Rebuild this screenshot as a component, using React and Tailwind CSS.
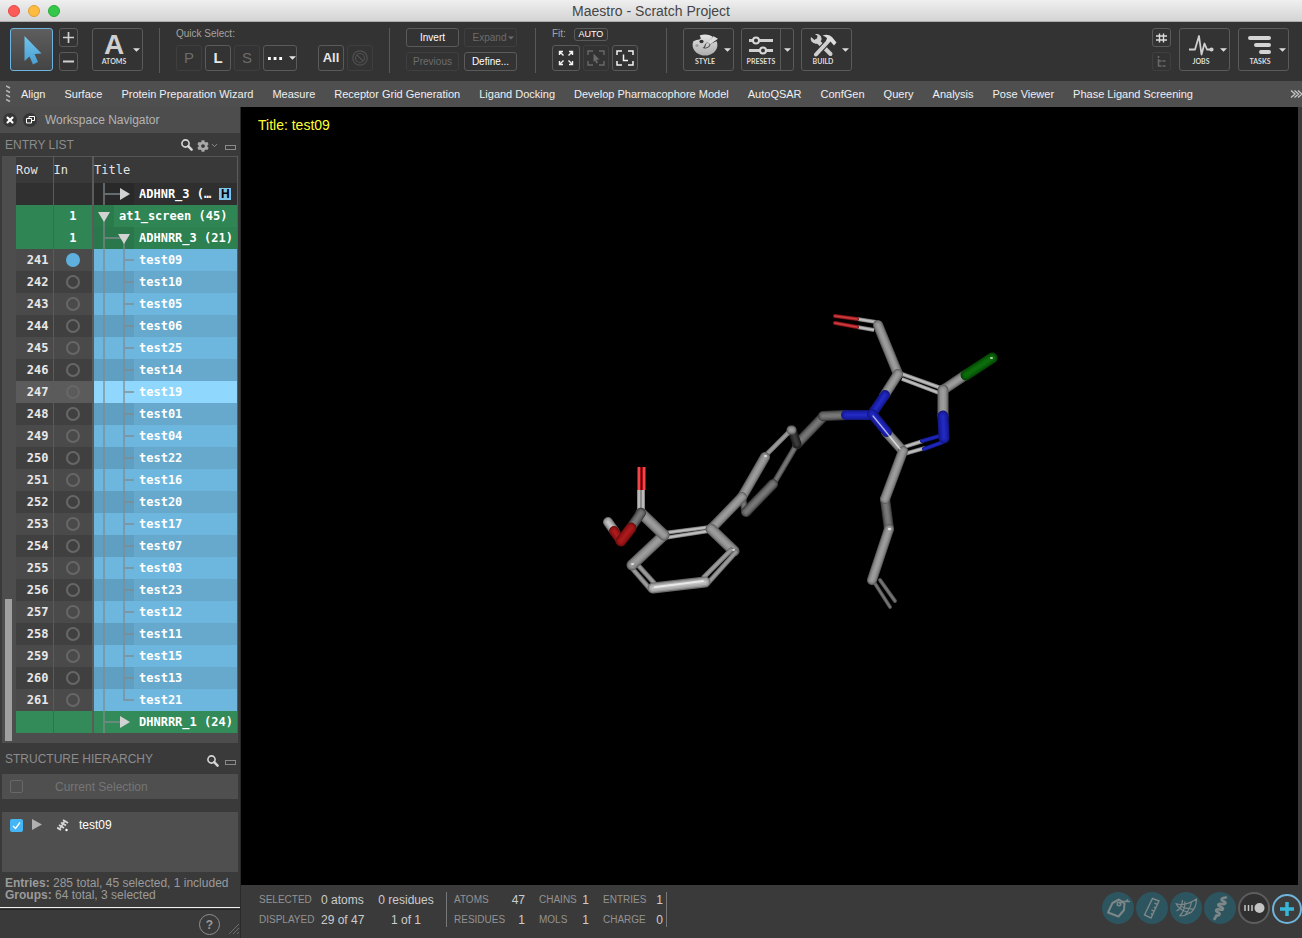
import React from "react";
import { FaCog } from "react-icons/fa";
import { ChevronDown, X } from "lucide-react";

const entries = [
  "test09", "test10", "test05", "test06", "test25", "test14", "test19",
  "test01", "test04", "test22", "test16", "test20", "test17", "test07",
  "test03", "test23", "test12", "test11", "test15", "test13", "test21",
];

const menuItems = [
  "Align", "Surface", "Protein Preparation Wizard", "Measure",
  "Receptor Grid Generation", "Ligand Docking", "Develop Pharmacophore Model",
  "AutoQSAR", "ConfGen", "Query", "Analysis", "Pose Viewer",
  "Phase Ligand Screening",
];

function Divider() {
  return <div className="h-[45px] w-px bg-[#585858]" />;
}

function Caret({ className = "" }) {
  return (
    <svg width="7" height="4" viewBox="0 0 8 4" className={`shrink-0 ${className}`} aria-hidden="true">
      <path d="M0 0h8L4 4z" fill="currentColor" />
    </svg>
  );
}

function ToolButton({ className = "", disabled = false, label, children }) {
  return (
    <button
      type="button"
      aria-label={label}
      disabled={disabled}
      className={`flex items-center justify-center rounded-[3px] border ${
        disabled ? "border-[#3f3f3f] text-[#6c6c6c]" : "border-[#5a5a5a] text-[#e6e6e6]"
      } ${className}`}
    >
      {children}
    </button>
  );
}

function BigButton({ text, children }) {
  return (
    <button
      type="button"
      className="flex h-[43px] w-[51px] items-center rounded-[3px] border border-[#5a5a5a] pl-1.5 text-[#dcdcdc]"
    >
      <span className="flex w-[30px] flex-col items-center">
        <span className="flex h-6 items-center justify-center">{children}</span>
        <span className="font-[Lato] text-[7px] leading-[9px] font-bold">{text}</span>
      </span>
      <Caret className="ml-1" />
    </button>
  );
}

function Toolbar() {
  return (
    <div className="flex h-[59px] items-start bg-[#333333] pt-1.5 pr-[13px] pl-2.5">
      <button
        type="button"
        aria-label="Pointer"
        className="flex h-[43px] w-[43px] items-center justify-center rounded-[3px] border border-[#6bb5df] bg-linear-to-b from-[#5e5e5e] to-[#444444]"
      >
        <svg width="20" height="32" viewBox="0 0 20 32" aria-hidden="true">
          <defs>
            <linearGradient id="ptr" x1="0" y1="0" x2="0" y2="1">
              <stop offset="0" stopColor="#72c4ee" />
              <stop offset="1" stopColor="#4a9fd0" />
            </linearGradient>
          </defs>
          <path d="M2.500 2L19.500 19.500L12.500 20L16 28L11 30.500L7.500 22.500L2.500 27Z" fill="url(#ptr)" />
        </svg>
      </button>
      <div className="ml-1.5 flex flex-col gap-[5px]">
        <ToolButton label="Increase selection" className="h-[19px] w-[19px]">
          <svg width="11" height="11" viewBox="0 0 11 11" aria-hidden="true">
            <path d="M5.500 0v11M0 5.500h11" stroke="#d0d0d0" strokeWidth="1.700" />
          </svg>
        </ToolButton>
        <ToolButton label="Decrease selection" className="h-[19px] w-[19px]">
          <svg width="11" height="11" viewBox="0 0 11 11" aria-hidden="true">
            <path d="M0 5.500h11" stroke="#d0d0d0" strokeWidth="2" />
          </svg>
        </ToolButton>
      </div>
      <div className="ml-3.5">
        <BigButton text="ATOMS">
          <span className="text-[28px] leading-6 font-bold text-[#cfcfcf]">A</span>
        </BigButton>
      </div>
      <div className="ml-4"><Divider /></div>

      <div className="ml-4">
        <div className="h-[17px] text-[10px] leading-[12px] text-[#a2a2a2]">Quick Select:</div>
        <div className="flex gap-[3px]">
          <ToolButton disabled className="h-[26px] w-[26px] text-[15px]">P</ToolButton>
          <ToolButton className="h-[26px] w-[26px] text-[15px] font-bold">L</ToolButton>
          <ToolButton disabled className="h-[26px] w-[26px] text-[15px]">S</ToolButton>
          <ToolButton label="More selections" className="h-[26px] w-[34px] gap-1.5 pl-1">
            <svg width="16" height="4" viewBox="0 0 16 4" aria-hidden="true">
              <path d="M0 1h3v3h-3zM6 1h3v3h-3zM12 1h3v3h-3z" fill="#ffffff" />
            </svg>
            <Caret />
          </ToolButton>
          <ToolButton className="ml-[18px] h-[26px] w-[26px] text-[13px] font-bold">All</ToolButton>
          <ToolButton label="Clear selection" disabled className="h-[26px] w-[26px]">
            <svg width="16" height="16" viewBox="0 0 16 16" fill="none" stroke="#505050" strokeWidth="1.200" aria-hidden="true">
              <circle cx="8" cy="8" r="7.200" />
              <circle cx="8" cy="8" r="4.500" />
              <path d="M5 5l6 6" />
            </svg>
          </ToolButton>
        </div>
      </div>
      <div className="ml-4"><Divider /></div>

      <div className="ml-4 grid grid-cols-[53px_53px] gap-[5px] text-[10px]">
        <ToolButton className="h-[19px] text-white">Invert</ToolButton>
        <ToolButton disabled className="h-[19px] gap-0.5 pl-1.5">Expand<Caret className="w-1.5" /></ToolButton>
        <ToolButton disabled className="h-[19px]">Previous</ToolButton>
        <ToolButton className="h-[19px] text-white">Define...</ToolButton>
      </div>
      <div className="ml-[18px]"><Divider /></div>

      <div className="ml-4">
        <div className="flex h-[17px] items-start gap-2">
          <span className="text-[10px] leading-[12px] text-[#a2a2a2]">Fit:</span>
          <ToolButton className="h-[13px] w-[34px] text-[9px] text-white">AUTO</ToolButton>
        </div>
        <div className="flex gap-[3px]">
          <ToolButton label="Fit all" className="h-[26px] w-7">
            <svg width="16" height="16" viewBox="0 0 16 16" fill="none" stroke="#f4f4f4" strokeWidth="1.400" aria-hidden="true">
              <path d="M1.500 5v-3.500h3.500M1.500 1.500l4 4M11 1.500h3.500v3.500M14.500 1.500l-4 4M1.500 11v3.500h3.500M1.500 14.500l4-4M11 14.500h3.500v-3.500M14.500 14.500l-4-4" />
            </svg>
          </ToolButton>
          <ToolButton label="Fit selected" disabled className="h-[26px] w-[26px]">
            <svg width="18" height="16" viewBox="0 0 18 16" fill="none" stroke="#6a6a6a" strokeWidth="1.400" aria-hidden="true">
              <path d="M1 5v-4h5M12 1h5v4M1 11v4h5M12 15h5v-4" />
              <path d="M6.500 3.500l6 6l-3 .3l1.500 3l-1.700 .7l-1.300-3l-1.500 1.500z" fill="#6a6a6a" stroke="none" />
            </svg>
          </ToolButton>
          <ToolButton label="Fit ligand" className="h-[26px] w-[26px]">
            <svg width="18" height="16" viewBox="0 0 18 16" fill="none" stroke="#f4f4f4" strokeWidth="1.500" aria-hidden="true">
              <path d="M1 5v-4h5M12 1h5v4M1 11v4h5M12 15h5v-4M7.500 4.500v6h4.500" />
            </svg>
          </ToolButton>
        </div>
      </div>
      <div className="ml-7"><Divider /></div>

      <div className="ml-4 flex gap-[7px]">
        <BigButton text="STYLE">
          <svg width="26" height="22" viewBox="0 0 26 22" aria-hidden="true">
            <defs>
              <linearGradient id="pal" x1="0" y1="0" x2="0" y2="1">
                <stop offset="0" stopColor="#e4e4e4" />
                <stop offset="1" stopColor="#adadad" />
              </linearGradient>
            </defs>
            <ellipse cx="13" cy="11" rx="12.400" ry="10.600" fill="url(#pal)" />
            <path d="M0 4L7 0L8.500 3.200Q9.500 5 7.500 5.400Q4 5.600 2 7L0 7Z" fill="#333333" />
            <path d="M26 1L20.500 3L16.500 8Q13.500 8.500 12.800 11Q12.500 13.500 10.500 14Q15.500 15.500 18 12L18.500 10L26 6.500Z" fill="#333333" />
            <path d="M21.500 2.200L15.500 8.300L18.300 10.200L26 4.800Z" fill="#dddddd" />
            <path d="M15.500 8.500Q13.800 9 13.700 11Q13.500 13 12.500 13.600Q16 14 17.300 11.500L17.600 10Z" fill="#cccccc" />
            <ellipse cx="9.500" cy="7.500" rx="2.100" ry="1.800" fill="#333333" />
            <circle cx="5" cy="11.500" r="1.600" fill="#9c9c9c" />
          </svg>
        </BigButton>
        <div className="flex h-[43px] w-[53px] rounded-[3px] border border-[#5a5a5a]">
          <button type="button" className="flex w-[39px] flex-col items-center border-r border-[#5a5a5a] pt-1 text-[#dcdcdc]">
            <span className="flex h-6 items-center">
              <svg width="24" height="19" viewBox="0 0 24 19" fill="none" aria-hidden="true">
                <path d="M0 4.500h24M0 14.500h24" stroke="#cfcfcf" strokeWidth="3" />
                <circle cx="7" cy="4.500" r="3" fill="#333333" stroke="#d8d8d8" strokeWidth="2" />
                <circle cx="14" cy="14.500" r="3" fill="#333333" stroke="#d8d8d8" strokeWidth="2" />
              </svg>
            </span>
            <span className="font-[Lato] text-[7px] leading-[9px] font-bold">PRESETS</span>
          </button>
          <button type="button" aria-label="Preset list" className="flex flex-1 items-center justify-center text-[#dcdcdc]">
            <Caret />
          </button>
        </div>
        <BigButton text="BUILD">
          <svg width="27" height="23" viewBox="0 0 27 23" aria-hidden="true">
            <path d="M7 6.500L20.500 20" stroke="#cfcfcf" strokeWidth="4" strokeLinecap="round" />
            <path d="M1 3L4.500 6L7 4.800L7.500 1.800L5 .2C9 -.5 12 2 11.500 6L8.500 9.500C4 10.500 -.5 7.500 1 3Z" fill="#cfcfcf" />
            <path d="M7 19.500L18 7.500" stroke="#333333" strokeWidth="6" />
            <path d="M6 20.500L18.500 7" stroke="#cfcfcf" strokeWidth="4" strokeLinecap="round" />
            <path d="M12.500 1.500Q18 -.5 22 3L24 5.500L26.500 8.500L24 11.500L20.500 7.500L16 7.500L17 4Q15 2 12.500 1.500Z" fill="#dddddd" />
          </svg>
        </BigButton>
      </div>

      <div className="ml-auto flex">
        <div className="flex flex-col gap-[5px]">
          <ToolButton label="Toggle grid" className="h-[19px] w-[19px]">
            <svg width="11" height="10" viewBox="0 0 11 10" fill="none" stroke="#dddddd" strokeWidth="1.400" aria-hidden="true">
              <path d="M3.500 .5v9M7.500 .5v9M0 3h11M0 7h11" />
            </svg>
          </ToolButton>
          <ToolButton label="Toggle tree" disabled className="h-[19px] w-[19px]">
            <svg width="9" height="11" viewBox="0 0 9 11" fill="none" stroke="#6a6a6a" strokeWidth="1.500" aria-hidden="true">
              <path d="M1.500 0v2M1.500 3v7h3M1.500 5h3M5.500 5h3M5.500 10h3" />
            </svg>
          </ToolButton>
        </div>
        <div className="ml-2 flex gap-2">
          <BigButton text="JOBS">
            <svg width="26" height="22" viewBox="0 0 26 22" fill="none" stroke="#cfcfcf" strokeWidth="1.800" strokeLinejoin="round" aria-hidden="true">
              <path d="M1 15.500h6L11 2L13.500 20.500L16.500 9.500L19 15.500h3" />
              <circle cx="23.500" cy="15.500" r="1.200" fill="#cfcfcf" />
            </svg>
          </BigButton>
          <BigButton text="TASKS">
            <svg width="24" height="20" viewBox="0 0 24 20" stroke="#d4d4d4" strokeWidth="4" strokeLinecap="round" aria-hidden="true">
              <path d="M2 3h19M8 10h13M13 17h8" />
            </svg>
          </BigButton>
        </div>
      </div>
    </div>
  );
}

function MenuBar() {
  return (
    <nav className="flex h-[26px] items-center bg-[#4f4f4f] pl-1.5 text-[11px] text-[#f0f0f0]">
      <svg width="6" height="18" viewBox="0 0 6 18" stroke="#b8b8b8" strokeWidth="1.500" aria-hidden="true">
        <path d="M0 1l4 2M0 5.500l4 2M0 10l4 2M0 14.500l4 2" />
      </svg>
      <div className="ml-[9px] flex flex-1 gap-[19px]">
        {menuItems.map((m) => (
          <a key={m} href="#" className="whitespace-nowrap">{m}</a>
        ))}
      </div>
      <button type="button" aria-label="More tools">
        <svg width="12" height="8" viewBox="0 0 12 8" fill="none" stroke="#c8c8c8" strokeWidth="1.300" aria-hidden="true">
          <path d="M1 .5l4 3.500l-4 3.500M4.500 .5l4 3.500l-4 3.500M8 .5l4 3.500l-4 3.500" />
        </svg>
      </button>
    </nav>
  );
}

function MinimizeIcon() {
  return <span className="block h-[5px] w-[11px] border border-[#8a8a8a]" />;
}

function SearchIcon() {
  return (
    <svg width="12" height="12" viewBox="0 0 12 12" fill="none" stroke="#d6d6d6" aria-hidden="true">
      <circle cx="4.500" cy="4.500" r="3.600" strokeWidth="1.600" />
      <path d="M7.200 7.200L10.600 10.600" strokeWidth="2.500" strokeLinecap="round" />
    </svg>
  );
}

function Tree({ kind, shade }) {
  const wide = kind !== "root";
  return (
    <svg width={wide ? 40 : 20} height="22" viewBox={wide ? "0 0 40 22" : "0 0 20 22"} className="shrink-0" aria-hidden="true">
      {shade && <rect width="40" height="22" fill={shade} />}
      <g stroke="#808a8f" strokeWidth="1.800" strokeOpacity="0.700" fill="none">
        {kind === "root" && <path d="M10 14v8" />}
        {kind === "closed" && <path d="M10 0v22M10 11h18" />}
        {kind === "open" && <path d="M10 0v22M10 11h18M30 15v7" />}
        {kind === "leaf" && <path d="M10 0v22M30 0v22M30 11h10" />}
        {kind === "last" && <path d="M10 0v22M30 0v11h10" />}
      </g>
      {kind === "root" && <path d="M4 7h12l-6 10z" fill="#d2d2d2" />}
      {kind === "open" && <path d="M24 7h12l-6 10z" fill="#d2d2d2" />}
      {kind === "closed" && <path d="M26 5v12l10-6z" fill="#d2d2d2" />}
    </svg>
  );
}

function GroupRow({ count, title, kind, bg, titleBg, shade, badge }) {
  return (
    <tr className={`h-[22px] font-bold text-white ${bg}`}>
      <td className="border-r border-[#5b5b5b] p-0" />
      <td className="border-r-2 border-[#5b5b5b] p-0 text-center">{count}</td>
      <td className={`border-r border-[#5b5b5b] p-0 ${titleBg}`}>
        <div className="flex h-[22px] items-center">
          <Tree kind={kind} shade={shade} />
          <span className="ml-[5px] whitespace-nowrap">{title}</span>
          {badge && (
            <span className="ml-2 flex h-3 w-3 items-center justify-center bg-[#7cc5ee] font-['Liberation_Sans'] text-[12px] leading-3 text-black">
              H
            </span>
          )}
        </div>
      </td>
    </tr>
  );
}

function EntryTable() {
  return (
    <table className="flex-1 table-fixed border-collapse self-start font-['DejaVu_Sans_Mono',monospace] text-[12px] leading-[22px]">
      <colgroup>
        <col className="w-[37px]" />
        <col className="w-10" />
        <col />
      </colgroup>
      <thead>
        <tr className="h-[26px] border-t border-[#565656] bg-[#393939] text-left text-[#e4e4e4]">
          <th className="border-r border-[#5b5b5b] p-0 font-normal">Row</th>
          <th className="border-r-2 border-[#5b5b5b] p-0 font-normal">In</th>
          <th className="border-r border-[#5b5b5b] p-0 font-normal">Title</th>
        </tr>
      </thead>
      <tbody>
        <GroupRow title="ADHNR_3 (…" kind="closed" bg="bg-[#303030]" titleBg="bg-[#2f2f2f]" shade="#292929" badge />
        <GroupRow count="1" title="at1_screen (45)" kind="root" bg="bg-[#2f8553]" titleBg="bg-[#2f8553]" shade="#2b7a4c" />
        <GroupRow count="1" title="ADHNRR_3 (21)" kind="open" bg="bg-[#2f8553]" titleBg="bg-[#2d8050]" shade="#2a774b" />
        {entries.map((name, i) => {
          const current = i === 6;
          const odd = i % 2 === 1;
          const side = current ? "bg-[#5b5b5b]" : odd ? "bg-[#404040]" : "bg-[#4a4a4a]";
          const main = current ? "bg-[#8fd7fc]" : odd ? "bg-[#66a9cc]" : "bg-[#6db7df]";
          return (
            <tr key={name} className={`h-[22px] font-bold text-[#e8e8e8] ${side}`}>
              <td className="border-r border-[#5b5b5b] p-0 pr-1 text-right">{241 + i}</td>
              <td className="border-r-2 border-[#5b5b5b] p-0">
                <input
                  type="radio"
                  name="included"
                  defaultChecked={i === 0}
                  aria-label={`Include ${name}`}
                  className="mx-auto block h-3.5 w-3.5 appearance-none rounded-full border-2 border-[#676767] checked:border-[#5fb0de] checked:bg-[#5fb0de]"
                />
              </td>
              <td className={`border-r border-[#5b5b5b] p-0 text-white ${main}`}>
                <div className="flex h-[22px] items-center">
                  <Tree kind={i === entries.length - 1 ? "last" : "leaf"} shade={odd ? "#5f9fc2" : undefined} />
                  <span className="ml-[5px]">{name}</span>
                </div>
              </td>
            </tr>
          );
        })}
        <GroupRow title="DHNRRR_1 (24)" kind="closed" bg="bg-[#338b5a]" titleBg="bg-[#338b5a]" />
      </tbody>
    </table>
  );
}

function Sidebar() {
  return (
    <aside className="flex w-[241px] shrink-0 flex-col border-r border-[#2a2a2a] bg-[#3a3a3a] text-[12px] text-[#9a9a9a]">
      <div className="flex h-[26px] items-center bg-[#4d4d4d] pl-[3px] text-[#b4b4b4]">
        <button type="button" aria-label="Close panel" className="flex h-3.5 w-3.5 items-center justify-center rounded-full bg-[#363636] text-white">
          <X size={10} strokeWidth={5} />
        </button>
        <button type="button" aria-label="Float panel" className="ml-1.5 flex h-3.5 w-3.5 items-center justify-center rounded-full bg-[#363636]">
          <svg width="9" height="8" viewBox="0 0 9 8" fill="none" stroke="#ffffff" aria-hidden="true">
            <path d="M.5 2.500h5v4.500h-5zM3 2.500v-2h5.500v4h-3" />
          </svg>
        </button>
        <h2 className="ml-2">Workspace Navigator</h2>
      </div>
      <div className="flex h-[23px] items-center pr-1 pl-[5px]">
        <h3 className="flex-1 text-[#8c8c8c]">ENTRY LIST</h3>
        <button type="button" aria-label="Search entries"><SearchIcon /></button>
        <button type="button" aria-label="Entry list settings" className="mt-0.5 ml-1 flex items-center text-[#a8a8a8]">
          <FaCog size={12} /><ChevronDown size={9} className="ml-px" />
        </button>
        <button type="button" aria-label="Minimize entry list" className="mt-1.5 ml-1.5"><MinimizeIcon /></button>
      </div>
      <div className="mr-[2px] ml-[2px] flex h-[587px] bg-[#4d4d4d]">
        <div className="flex w-3.5 items-end pb-0.5 pl-[3px]">
          <div className="h-[142px] w-[7px] bg-[#a0a0a0]" />
        </div>
        <EntryTable />
      </div>
      <div className="mt-1 mb-1 flex h-[23px] items-center pr-1 pl-[5px]">
        <h3 className="flex-1 text-[#8c8c8c]">STRUCTURE HIERARCHY</h3>
        <button type="button" aria-label="Search hierarchy" className="mt-1"><SearchIcon /></button>
        <button type="button" aria-label="Minimize hierarchy" className="mt-2 ml-1.5"><MinimizeIcon /></button>
      </div>
      <label className="mx-[2px] flex h-[25px] items-center bg-[#4f4f4f] pl-2 text-[#757575]">
        <input type="checkbox" disabled className="h-[13px] w-[13px] appearance-none rounded-[2px] border border-[#686868]" />
        <span className="ml-8">Current Selection</span>
      </label>
      <div className="mx-[2px] mt-[13px] flex h-[60px] items-start bg-[#4f4f4f] pt-1.5 pl-2">
        <span className="relative mt-px flex h-[13px] w-[13px]">
          <input id="show" type="checkbox" defaultChecked className="h-[13px] w-[13px] appearance-none rounded-[2px] bg-[#45b5f5]" />
          <svg width="13" height="13" viewBox="0 0 13 13" className="pointer-events-none absolute inset-0" aria-hidden="true">
            <path d="M3 7l2.500 2.500L10 3.500" fill="none" stroke="#ffffff" strokeWidth="1.300" />
          </svg>
        </span>
        <svg width="10" height="12" viewBox="0 0 10 12" className="mt-px ml-[9px]" aria-hidden="true">
          <path d="M0 0v11l10-5.500z" fill="#b0b0b0" />
        </svg>
        <svg width="12" height="13" viewBox="0 0 12 13" className="mt-px ml-[15px]" fill="none" stroke="#d6d6d6" aria-hidden="true">
          <path d="M6 1l5 3M4 3.500l5 3M2 6l5 3M0 8.500l4 2.500" strokeWidth="2" />
          <path d="M8 1.500L3 9.500" strokeWidth="1.500" />
          <circle cx="9.500" cy="11" r="1.200" fill="#ffffff" stroke="none" />
        </svg>
        <label htmlFor="show" className="ml-2.5 leading-[14px] text-white">test09</label>
      </div>
      <div className="mt-[5px] pl-[5px] text-[12px] leading-3 whitespace-nowrap">
        <p><b>Entries:</b> 285 total, 45 selected, 1 included</p>
        <p><b>Groups:</b> 64 total, 3 selected</p>
      </div>
      <div className="mt-1.5 h-px bg-[#f0f0f0]" />
      <div className="mt-px flex flex-1 items-end justify-end border-t border-[#252525] pb-[3px]">
        <button type="button" aria-label="Help" className="mr-2 flex h-[21px] w-[21px] items-center justify-center rounded-full border border-[#909090] font-bold">?</button>
        <svg width="12" height="12" viewBox="0 0 12 12" stroke="#6d6d6d" aria-hidden="true">
          <path d="M1 11L11 1M5 11L11 5M9 11L11 9" />
        </svg>
      </div>
    </aside>
  );
}

/* Colour ramps run from the rim of a stick to its lit centre. */
const ramps = {
  grey: ["#5e5e5e", "#7e7e7e", "#929292", "#9c9c9c"],
  dim: ["#3c3c3c", "#585858", "#6d6d6d", "#787878"],
  dark: ["#1c1c1c", "#282828", "#343434", "#3c3c3c"],
  light: ["#6c6c6c", "#989898", "#b0b0b0", "#c4c4c4"],
  red: ["#6a0e0f", "#8d1213", "#a01618", "#aa1b1e"],
  hot: ["#77090c", "#c90f16", "#e0262c", "#f36b6e"],
  rust: ["#6b1214", "#a01c20", "#b8282c", "#cc4448"],
  blue: ["#131880", "#181d9e", "#1c23b4", "#222abf"],
  green: ["#064306", "#075507", "#096509", "#0d6d0d"],
};

const bonds = [
  // rear phenyl ring
  [745, 512, 743, 500, 7, "dim"],
  [797, 444, 774, 483, 6, "dim"],
  [773, 484, 746, 512, 10, "dim"],
  [797, 444, 823, 417, 10, "dim"],
  [792, 430, 797, 444, 9, "dark"],
  [766, 455, 791, 430, 5, "grey"],
  [791, 430, 792, 430, 9, "grey"],
  // link to the imidazole
  [823, 416, 847, 415, 10, "dim"],
  [871, 415, 846, 415, 10, "blue"],
  [742, 497, 765, 457, 10, "grey"],
  [711, 529, 742, 497, 10, "grey"],
  // front phenyl ring
  [664, 533, 710, 527, 4, "light"],
  [664, 538, 709, 531, 4, "light"],
  [711, 529, 734, 551, 11, "grey"],
  [736, 552, 708, 583, 5, "grey"],
  [731, 550, 704, 577, 5, "grey"],
  [631, 567, 650, 589, 5, "grey"],
  [636, 563, 656, 585, 5, "grey"],
  [664, 535, 632, 565, 11, "grey"],
  [653, 588, 705, 582, 11, "light"],
  // carboxylic acid
  [639, 510, 639, 490, 4, "light"],
  [643, 510, 643, 490, 4, "light"],
  [639, 490, 639, 467, 4, "hot"],
  [644, 490, 644, 467, 4, "hot"],
  [664, 535, 641, 513, 11, "grey"],
  [641, 513, 630, 529, 10, "dim"],
  [608, 522, 615, 532, 10, "light"],
  [621, 541, 614, 531, 10, "red"],
  [621, 541, 631, 528, 11, "red"],
  // aldehyde
  [857, 319, 876, 322, 4, "light"],
  [857, 327, 874, 330, 4, "light"],
  [835, 316, 857, 319, 4, "rust"],
  [835, 323, 857, 327, 4, "rust"],
  [878, 325, 898, 374, 10, "grey"],
  // imidazole ring
  [902, 374, 941, 388, 4, "light"],
  [902, 379, 939, 393, 4, "light"],
  [898, 374, 884, 396, 10, "grey"],
  [943, 390, 967, 374, 10, "grey"],
  [943, 390, 943, 416, 11, "grey"],
  [992, 358, 966, 375, 11, "green"],
  [904, 447, 923, 441, 4, "light"],
  [904, 454, 925, 448, 4, "light"],
  [943, 435, 922, 441, 4, "blue"],
  [943, 442, 924, 449, 4, "blue"],
  [944, 438, 943, 416, 11, "blue"],
  [903, 451, 886, 432, 10, "grey"],
  [872, 414, 885, 395, 10, "blue"],
  [872, 414, 887, 432, 10, "blue"],
  // alkyl tail
  [874, 582, 890, 607, 4, "dim"],
  [880, 580, 895, 601, 4, "dim"],
  [885, 499, 889, 529, 10, "dim"],
  [903, 451, 885, 499, 10, "grey"],
  [889, 529, 872, 580, 10, "grey"],
];

const glints = [
  [873, 416, 900, 449, 1.3],
  [655, 587, 703, 581, 2],
  [991, 358, 992, 358, 2],
  [889, 529, 890, 529, 2.5],
  [765, 456, 766, 456, 2],
  [733, 550, 734, 550, 2],
  [632, 564, 633, 564, 2],
];

function Molecule() {
  return (
    <svg viewBox="241 107 1057 778" className="absolute inset-0 h-full w-full" strokeLinecap="round" role="img" aria-label="Stick model of ligand test09">
      {bonds.map(([x1, y1, x2, y2, w, c], i) => (
        <g key={i} strokeLinecap={["light", "hot"].includes(c) && w === 4 ? "butt" : "round"}>
          {[1, 0.8, 0.55, 0.25].map((k, j) => (
            <line key={j} x1={x1} y1={y1} x2={x2} y2={y2} stroke={ramps[c][j]} strokeWidth={w * k} />
          ))}
        </g>
      ))}
      {glints.map(([x1, y1, x2, y2, w], i) => (
        <line key={i} x1={x1} y1={y1} x2={x2} y2={y2} stroke="#ffffff" strokeOpacity="0.650" strokeWidth={w} />
      ))}
    </svg>
  );
}

function Round({ label, children }) {
  return (
    <button type="button" aria-label={label} className="flex h-8 w-8 items-center justify-center rounded-full bg-[#2d5560]">
      <svg width="26" height="26" viewBox="0 0 26 26" fill="none" stroke="#7d8788" strokeWidth="1.400" aria-hidden="true">{children}</svg>
    </button>
  );
}

function Counts() {
  const groups = [
    ["w-[71px]", "ATOMS", "47", "RESIDUES", "1"],
    ["w-[50px]", "CHAINS", "1", "MOLS", "1"],
    ["w-[60px]", "ENTRIES", "1", "CHARGE", "0"],
  ];
  return (
    <div className="ml-[7px] flex gap-3.5">
      {groups.map(([w, a, av, b, bv]) => (
        <dl key={a} className={`grid grid-cols-[1fr_auto] ${w}`}>
          <dt className="text-[10px] text-[#929292]">{a}</dt><dd className="text-right">{av}</dd>
          <dt className="text-[10px] text-[#929292]">{b}</dt><dd className="text-right">{bv}</dd>
        </dl>
      ))}
    </div>
  );
}

function Status() {
  return (
    <footer className="flex h-[53px] items-start bg-[#3a3a3a] pl-[18px] text-[12px] leading-5 text-[#cccccc]">
      <div className="flex pt-[5px]">
        <div className="grid grid-cols-[62px_57px_56px] whitespace-nowrap">
          <span className="text-[10px] text-[#929292]">SELECTED</span><span>0 atoms</span><span className="text-center">0 residues</span>
          <span className="text-[10px] text-[#929292]">DISPLAYED</span><span>29 of 47</span><span className="text-center">1 of 1</span>
        </div>
        <div className="mt-[2px] ml-3 h-[35px] w-px bg-[#777777]" />
        <Counts />
        <div className="mt-[2px] ml-[3px] h-[35px] w-px bg-[#777777]" />
      </div>
      <div className="ml-auto flex items-center gap-0.5 pt-[7px]">
        <Round label="Labels">
          <path d="M3 17.500L7.500 8L14 4.500L19.500 8.500L19 15L13.500 21.500Z" strokeWidth="2" strokeLinejoin="round" />
          <circle cx="14" cy="9" r="1.800" />
          <path d="M14.500 9L17.500 6.500H25M20 7L23 4.500" />
        </Round>
        <Round label="Measure">
          <path d="M13.500 3.500L20 6L12 23L5.500 20ZM18.500 9.500l-3-1.300M16.800 13l-2-.9M15.500 16.300l-3-1.300M13.800 19.500l-2-.9" />
        </Round>
        <Round label="Surface">
          <path d="M2.500 8.500C9 11 16 9 23.500 4C23.500 9 22 14 18 17.500C13 20.500 9 21 6.500 21M3 8.500C5 13 8 16 17 17.500M7 9.500C9 13 13 13.500 20.500 14M6.500 21C11 17 12 13 12 6.500M3.500 16C7 14 9 12 9.500 5M12 20C16 15 18 11 18.500 7" strokeWidth="1.200" />
        </Round>
        <Round label="Ribbon">
          <path d="M19 2.500C14 3 13 5 17 6.500C20 8 18 9.500 14.500 9C10.500 8.500 10 10.500 14 12C17.500 13.500 16 15.500 12.500 14.500C8.500 13.500 8 16 11.500 17.500C14 19 12 21 9.500 20.500L7.500 24" strokeWidth="2.600" strokeLinecap="round" />
        </Round>
        <button type="button" aria-label="Toggle display" className="flex h-8 w-8 items-center justify-center rounded-full border-2 border-[#5d5d5d] bg-[#303030]">
          <svg width="22" height="12" viewBox="0 0 22 12" aria-hidden="true">
            <path d="M2 3v6M5.500 3v6M9 3v6" stroke="#c4c4c4" strokeWidth="1.500" />
            <circle cx="16.500" cy="6" r="5" fill="#c4c4c4" />
          </svg>
        </button>
        <button type="button" aria-label="Add" className="mt-0.5 flex h-[30px] w-[30px] items-center justify-center rounded-full border-2 border-[#70b4dc] bg-[#3d3d3d]">
          <svg width="14" height="14" viewBox="0 0 14 14" aria-hidden="true">
            <path d="M7 0v14M0 7h14" stroke="#38b6d8" strokeWidth="3.500" />
          </svg>
        </button>
      </div>
    </footer>
  );
}

export default function App() {
  return (
    <div className="flex min-h-screen flex-col bg-[#3a3a3a] font-['Liberation_Sans',Arial,sans-serif]">
      <header className="grid h-[22px] grid-cols-[1fr_auto_1fr] items-center border-b border-[#aeaeae] bg-linear-to-b from-[#efefef] to-[#d4d4d4] px-2">
        <div className="flex gap-2">
          <button type="button" aria-label="Close" className="h-3 w-3 rounded-full border border-[#e24b48] bg-[#fc5b57]" />
          <button type="button" aria-label="Minimize" className="h-3 w-3 rounded-full border border-[#e0a030] bg-[#fdbc40]" />
          <button type="button" aria-label="Zoom" className="h-3 w-3 rounded-full border border-[#27ac36] bg-[#34c84a]" />
        </div>
        <h1 className="text-[14px] leading-5 text-[#454545]">Maestro - Scratch Project</h1>
      </header>
      <Toolbar />
      <MenuBar />
      <div className="flex flex-1">
        <Sidebar />
        <div className="flex min-w-0 flex-1 flex-col">
          <main className="relative mr-1 flex-1 bg-black">
            <Molecule />
            <p className="relative pt-2 pl-[17px] text-[14px] leading-5 text-[#ffff33]">Title: test09</p>
          </main>
          <Status />
        </div>
      </div>
    </div>
  );
}
